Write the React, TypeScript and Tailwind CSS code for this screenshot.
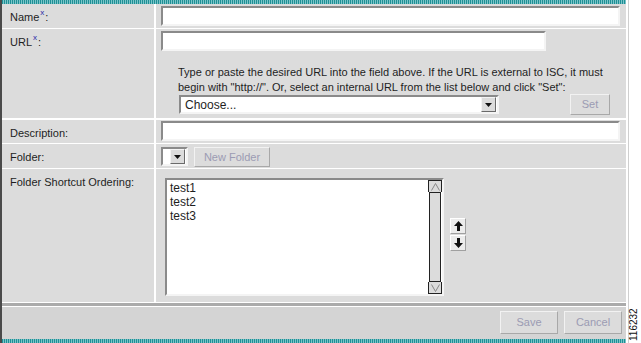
import React from "react";

const sunken =
  "bg-white border-2 border-t-[#8a8a8a] border-l-[#8a8a8a] border-b-[#f4f4f4] border-r-[#f4f4f4]";

const flatButton =
  "border border-[#f2f2f2] border-r-[#a8a8a8] border-b-[#a8a8a8] bg-[#dcdcdc] text-[#9b9bb3] text-[11px] flex items-center justify-center";

const Stripe = () => (
  <div className="h-[4px] w-full bg-[repeating-linear-gradient(90deg,#1f8f95_0px,#1f8f95_1px,#7cc4c8_1px,#7cc4c8_2px)]" />
);

const Label = ({ children, star }: { children: React.ReactNode; star?: boolean }) => (
  <div className="w-[154px] shrink-0 border-r-2 border-white pl-[8px] pt-[5px] text-[11px] text-[#1e1e1e]">
    {children}
    {star ? (
      <>
        <span className="relative -top-[6px] text-[8px] text-[#2a2aa8] ml-[1px]">x</span>
        <span className="ml-[1px]">:</span>
      </>
    ) : null}
  </div>
);

const DropArrow = () => (
  <div className="w-[15px] h-[15px] bg-[#dcdcdc] border border-[#f4f4f4] border-r-[#6a6a6a] border-b-[#6a6a6a] flex items-center justify-center">
    <svg width="7" height="4" viewBox="0 0 7 4">
      <polygon points="0,0 7,0 3.5,4" fill="#111" />
    </svg>
  </div>
);

const ArrowBtn = ({ up }: { up?: boolean }) => (
  <div className="w-[16px] h-[16px] bg-[#ececec] border border-white border-r-[#a0a0a0] border-b-[#a0a0a0] flex items-center justify-center">
    <svg width="9" height="10" viewBox="0 0 9 10">
      {up ? (
        <polygon points="4.5,0 9,5 6,5 6,10 3,10 3,5 0,5" fill="#111" />
      ) : (
        <polygon points="4.5,10 9,5 6,5 6,0 3,0 3,5 0,5" fill="#111" />
      )}
    </svg>
  </div>
);

export default function App() {
  return (
    <div className="w-[641px] h-[343px] bg-white flex font-['Liberation_Sans',Arial,sans-serif] overflow-hidden">
      <div className="w-[628px] h-full flex flex-col bg-[#dcdcdc] border-l-2 border-[#4a4a4a] border-r-2 border-r-white">
        <Stripe />
        {/* Name */}
        <div className="flex h-[25px] border-b border-white">
          <Label star>Name</Label>
          <div className="flex-1 pl-[5px] pt-[2px]">
            <div className={`${sunken} w-[459px] h-[20px]`} />
          </div>
        </div>
        {/* URL */}
        <div className="flex h-[91px] border-b-2 border-white">
          <Label star>URL</Label>
          <div className="flex-1 pl-[5px] pt-[2px]">
            <div className={`${sunken} w-[385px] h-[20px]`} />
            <p className="ml-[17px] mt-[14px] text-[11px] leading-[15px] text-[#1e1e1e]">
              Type or paste the desired URL into the field above. If the URL is external to ISC, it must
              <br />
              begin with "http://". Or, select an internal URL from the list below and click "Set":
            </p>
            <div className="flex items-center ml-[18px] -mt-[1px]">
              <div className={`${sunken} w-[320px] h-[19px] flex items-center justify-between pl-[4px] pr-[1px]`}>
                <span className="text-[12px] text-[#1e1e1e]">Choose...</span>
                <DropArrow />
              </div>
              <div className={`${flatButton} ml-[71px] w-[40px] h-[21px] text-[10px]`}>Set</div>
            </div>
          </div>
        </div>
        {/* Description */}
        <div className="flex h-[24px] border-b border-white">
          <Label>Description:</Label>
          <div className="flex-1 pl-[5px] pt-[1px]">
            <div className={`${sunken} w-[459px] h-[20px]`} />
          </div>
        </div>
        {/* Folder */}
        <div className="flex h-[25px] border-b border-white">
          <Label>Folder:</Label>
          <div className="flex-1 pl-[5px] pt-[3px] flex items-start">
            <div className={`${sunken} w-[27px] h-[19px] flex items-center justify-end pr-[1px]`}>
              <DropArrow />
            </div>
            <div className={`${flatButton} ml-[6px] w-[76px] h-[20px]`}>New Folder</div>
          </div>
        </div>
        {/* Folder Shortcut Ordering */}
        <div className="flex h-[134px] border-b border-white">
          <Label>Folder Shortcut Ordering:</Label>
          <div className="flex-1 pl-[9px] pt-[9px] flex items-start">
            <div className={`${sunken} w-[279px] h-[118px] flex`}>
              <div className="flex-1 pl-[3px] pt-[1px] text-[12px] leading-[14px] text-[#1e1e1e]">
                <div>test1</div>
                <div>test2</div>
                <div>test3</div>
              </div>
              <div className="w-[14px] h-full bg-white flex flex-col">
                <div className="h-[12px] border border-[#222] border-b-0 bg-[#dcdcdc] flex items-center justify-center">
                  <svg width="9" height="8" viewBox="0 0 9 8">
                    <polyline points="0.5,7.5 4.5,0.5 8.5,7.5" fill="none" stroke="#888" strokeWidth="1" />
                  </svg>
                </div>
                <div className="flex-1 border-x border-[#222] border-y border-y-[#222] bg-[#dcdcdc] mx-[1px]" />
                <div className="h-[12px] border border-[#222] border-t-0 bg-[#dcdcdc] flex items-center justify-center">
                  <svg width="9" height="8" viewBox="0 0 9 8">
                    <polyline points="0.5,0.5 4.5,7.5 8.5,0.5" fill="none" stroke="#888" strokeWidth="1" />
                  </svg>
                </div>
              </div>
            </div>
            <div className="ml-[6px] mt-[40px] flex flex-col gap-[1px]">
              <ArrowBtn up />
              <ArrowBtn />
            </div>
          </div>
        </div>
        {/* separator */}
        <div className="h-[4px] bg-[#ababab] border-b border-white" />
        {/* footer */}
        <div className="flex-1 bg-[#d4d4d4] flex justify-end items-start pt-[4px] pr-[4px] gap-[6px]">
          <div className={`${flatButton} w-[58px] h-[23px] bg-[#d4d4d4]`}>Save</div>
          <div className={`${flatButton} w-[58px] h-[23px] bg-[#d4d4d4]`}>Cancel</div>
        </div>
        <Stripe />
      </div>
      <div className="flex-1 relative border-l border-[#cfcfcf]">
        <span className="absolute left-[-2px] bottom-[2px] origin-bottom-left -rotate-90 translate-x-[12px] text-[10px] leading-[10px] text-[#111]">
          116232
        </span>
      </div>
    </div>
  );
}
